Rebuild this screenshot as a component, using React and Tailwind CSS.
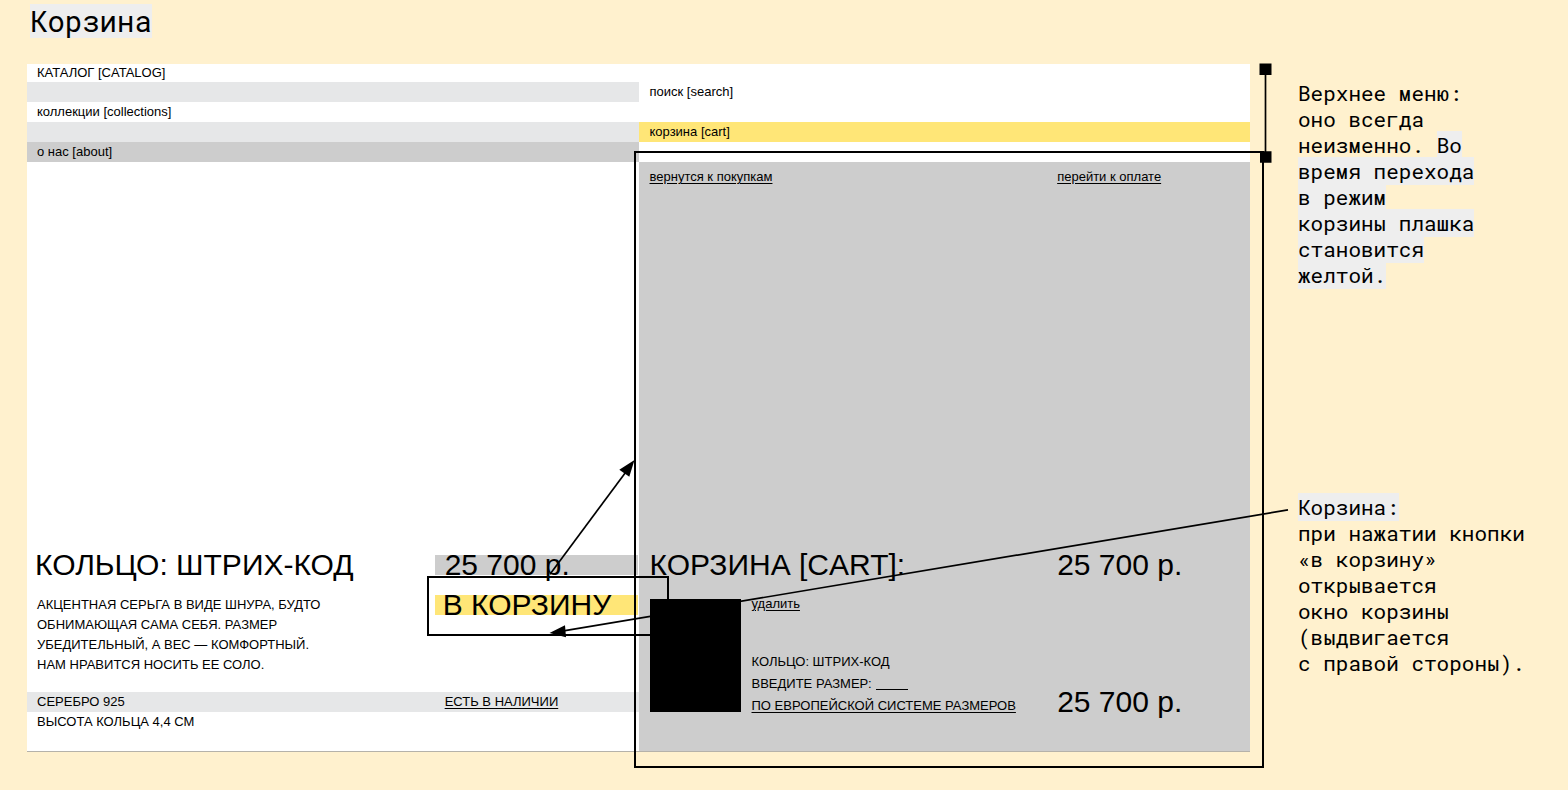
import React from "react";

const smallText = "text-[13px] leading-5";
const bigText = "text-[30px] leading-5";

function MenuRow({ children, tone, pad = "px-[10px]" }) {
  return (
    <li className={`h-5 ${pad} ${smallText} ${tone}`}>
      {children && <a href="#">{children}</a>}
    </li>
  );
}

function TopMenu() {
  return (
    <nav aria-label="Верхнее меню" className="grid grid-cols-2">
      <ul>
        <li className="h-[18px] bg-white px-[10px] text-[13px] leading-[18px]">
          <a href="#">КАТАЛОГ [CATALOG]</a>
        </li>
        <MenuRow tone="bg-[#e6e7e8]" />
        <MenuRow tone="bg-white">коллекции [collections]</MenuRow>
        <MenuRow tone="bg-[#e6e7e8]" />
        <MenuRow tone="bg-[#cdcdcd]">о нас [about]</MenuRow>
      </ul>
      <ul className="bg-white pt-[18px]">
        <MenuRow tone="bg-white" pad="px-[11px]">поиск [search]</MenuRow>
        <MenuRow tone="bg-white" />
        <MenuRow tone="bg-[#ffe677]" pad="px-[11px]">корзина [cart]</MenuRow>
      </ul>
    </nav>
  );
}

function Product() {
  return (
    <section className="flex min-h-[589px] flex-col justify-end bg-white pb-[19px]">
      <div className="grid grid-cols-3 gap-y-5">
        <h2 className={`col-span-2 whitespace-nowrap pl-2 ${bigText}`}>КОЛЬЦО: ШТРИХ-КОД</h2>
        <p className={`whitespace-nowrap bg-[#cdcdcd] pl-[10px] ${bigText}`}>25 700 р.</p>
        <p className={`col-span-2 pl-[10px] ${smallText}`}>
          АКЦЕНТНАЯ СЕРЬГА В ВИДЕ ШНУРА, БУДТО
          <br />
          ОБНИМАЮЩАЯ САМА СЕБЯ. РАЗМЕР
          <br />
          УБЕДИТЕЛЬНЫЙ, А ВЕС — КОМФОРТНЫЙ.
          <br />
          НАМ НРАВИТСЯ НОСИТЬ ЕЕ СОЛО.
        </p>
        <div className="relative self-start">
          <button
            type="button"
            className={`block h-5 w-full whitespace-nowrap bg-[#ffe677] pl-2 text-left ${bigText}`}
          >
            В КОРЗИНУ
          </button>
          <span className="pointer-events-none absolute -bottom-[21px] -left-2 -right-[31px] -top-[19px] z-10 border-2 border-black" />
        </div>
      </div>
      <div className={`mt-[17px] grid grid-cols-3 bg-[#e6e7e8] ${smallText}`}>
        <p className="col-span-2 pl-[10px]">СЕРЕБРО 925</p>
        <p className="pl-[10px]">
          <a href="#" className="underline underline-offset-2">ЕСТЬ В НАЛИЧИИ</a>
        </p>
      </div>
      <p className={`pl-[10px] ${smallText}`}>ВЫСОТА КОЛЬЦА 4,4 СМ</p>
    </section>
  );
}

function Cart() {
  return (
    <section className="relative flex min-h-[589px] flex-col justify-between bg-[#cdcdcd] pb-[39px] pt-[5px]">
      <div className={`grid grid-cols-3 ${smallText}`}>
        <p className="col-span-2 pl-[11px]">
          <a href="#" className="underline underline-offset-2">вернутся к покупкам</a>
        </p>
        <p className="pl-[11px]">
          <a href="#" className="underline underline-offset-2">перейти к оплате</a>
        </p>
      </div>
      <div className="grid grid-cols-3 gap-y-6">
        <h2 className={`col-span-2 whitespace-nowrap pl-[11px] ${bigText}`}>КОРЗИНА [CART]:</h2>
        <p className={`whitespace-nowrap pl-[11px] ${bigText}`}>25 700 р.</p>
        <div className="col-span-2 flex gap-[11px] pl-[11px]">
          <div className="h-[113px] w-[91px] shrink-0 bg-black" />
          <div className="flex flex-col justify-between whitespace-nowrap text-[13px]">
            <button type="button" className="self-start leading-[10px] underline underline-offset-2">
              удалить
            </button>
            <div className="-mb-[5px] leading-[22px]">
              <p>КОЛЬЦО: ШТРИХ-КОД</p>
              <p className="flex gap-1">
                <label htmlFor="ring-size">ВВЕДИТЕ РАЗМЕР:</label>
                <input
                  id="ring-size"
                  type="text"
                  className="h-[17px] w-8 border-b border-black bg-transparent outline-none"
                />
              </p>
              <p>
                <a href="#" className="underline underline-offset-2">ПО ЕВРОПЕЙСКОЙ СИСТЕМЕ РАЗМЕРОВ</a>
              </p>
            </div>
          </div>
        </div>
        <p className={`self-end whitespace-nowrap pl-[11px] ${bigText}`}>25 700 р.</p>
      </div>
      <span className="pointer-events-none absolute -bottom-[17px] -left-[5px] -right-[14px] -top-[11px] border-2 border-black" />
    </section>
  );
}

function Callouts() {
  return (
    <svg
      aria-hidden="true"
      className="pointer-events-none absolute inset-0 z-20 h-full w-full overflow-visible"
      viewBox="27 64 1223 688"
      preserveAspectRatio="none"
    >
      <g stroke="#000" strokeWidth="1.7" fill="none">
        <path d="M550 575L627 471" />
        <path d="M1288 510.500L562 632" />
        <path d="M1265.500 69V157" />
      </g>
      <path d="M634.500 460.500L619.300 470.300L629.300 477.300Z" />
      <path d="M549.500 633.800L565 626L566 638.200Z" />
      <path d="M1259.500 63.500h12v11.500h-12zM1260 151.500h11.500v11.500h-11.500z" />
    </svg>
  );
}

const Mark = ({ children }) => <span className="bg-[#eeeeee]">{children}</span>;

export default function App() {
  return (
    <main className="min-h-screen bg-[#fff1ce] pb-[38px] pl-[27px] font-['Liberation_Sans',Arial,sans-serif] text-black">
      <h1 className="flex h-16 items-start pl-[3px] pt-1 font-['Roboto_Mono','DejaVu_Sans_Mono',monospace] text-[29px] leading-[34px]">
        <Mark>Корзина</Mark>
      </h1>
      <div className="flex items-start gap-12">
        <div className="relative min-w-0 flex-1 border-b border-[#b5b2aa]">
          <TopMenu />
          <div className="grid grid-cols-2">
            <Product />
            <Cart />
          </div>
          <Callouts />
        </div>
        <aside className="w-[270px] shrink-0 whitespace-nowrap pt-4 font-['Roboto_Mono','DejaVu_Sans_Mono',monospace] text-[21px] leading-[26px]">
          <p>
            Верхнее меню:
            <br />
            оно всегда
            <br />
            неизменно. <Mark>Во</Mark>
            <br />
            <Mark>время перехода</Mark>
            <br />
            <Mark>в режим</Mark>
            <br />
            <Mark>корзины плашка</Mark>
            <br />
            <Mark>становится</Mark>
            <br />
            <Mark>желтой.</Mark>
          </p>
          <p className="mt-[206px]">
            <Mark>Корзина:</Mark>
            <br />
            при нажатии кнопки
            <br />
            «в корзину»
            <br />
            открывается
            <br />
            окно корзины
            <br />
            (выдвигается
            <br />с правой стороны).
          </p>
        </aside>
      </div>
    </main>
  );
}
